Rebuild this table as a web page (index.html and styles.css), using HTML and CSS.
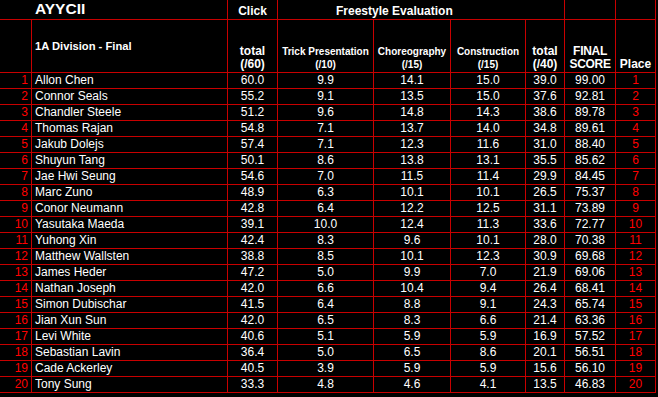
FILE: index.html
```html
<!DOCTYPE html>
<html lang="en">
<head>
<meta charset="utf-8">
<title>AYYCII 1A Division - Final</title>
<link rel="stylesheet" href="styles.css">
</head>
<body>
<table class="results">
  <colgroup>
    <col class="w-rank"><col class="w-name"><col class="w-click"><col class="w-trick"><col class="w-choreo"><col class="w-constr"><col class="w-total"><col class="w-final"><col class="w-place">
  </colgroup>
  <thead>
    <tr class="row-top">
      <th class="blank"></th>
      <th class="title">AYYCII</th>
      <th class="group">Click</th>
      <th class="group group-free" colspan="4">Freestyle Evaluation</th>
      <th class="group"></th>
      <th class="group"></th>
    </tr>
    <tr class="row-head">
      <th class="rank-head"></th>
      <th class="division">1A Division - Final</th>
      <th class="head">total<br>(/60)</th>
      <th class="head sub">Trick Presentation<br>(/10)</th>
      <th class="head sub">Choreography<br>(/15)</th>
      <th class="head sub">Construction<br>(/15)</th>
      <th class="head">total<br>(/40)</th>
      <th class="head final">FINAL<br>SCORE</th>
      <th class="head">Place</th>
    </tr>
  </thead>
  <tbody>
    <tr><td class="rank">1</td><td class="name">Allon Chen</td><td>60.0</td><td>9.9</td><td>14.1</td><td>15.0</td><td>39.0</td><td>99.00</td><td class="place">1</td></tr>
    <tr><td class="rank">2</td><td class="name">Connor Seals</td><td>55.2</td><td>9.1</td><td>13.5</td><td>15.0</td><td>37.6</td><td>92.81</td><td class="place">2</td></tr>
    <tr><td class="rank">3</td><td class="name">Chandler Steele</td><td>51.2</td><td>9.6</td><td>14.8</td><td>14.3</td><td>38.6</td><td>89.78</td><td class="place">3</td></tr>
    <tr><td class="rank">4</td><td class="name">Thomas Rajan</td><td>54.8</td><td>7.1</td><td>13.7</td><td>14.0</td><td>34.8</td><td>89.61</td><td class="place">4</td></tr>
    <tr><td class="rank">5</td><td class="name">Jakub Dolejs</td><td>57.4</td><td>7.1</td><td>12.3</td><td>11.6</td><td>31.0</td><td>88.40</td><td class="place">5</td></tr>
    <tr><td class="rank">6</td><td class="name">Shuyun Tang</td><td>50.1</td><td>8.6</td><td>13.8</td><td>13.1</td><td>35.5</td><td>85.62</td><td class="place">6</td></tr>
    <tr><td class="rank">7</td><td class="name">Jae Hwi Seung</td><td>54.6</td><td>7.0</td><td>11.5</td><td>11.4</td><td>29.9</td><td>84.45</td><td class="place">7</td></tr>
    <tr><td class="rank">8</td><td class="name">Marc Zuno</td><td>48.9</td><td>6.3</td><td>10.1</td><td>10.1</td><td>26.5</td><td>75.37</td><td class="place">8</td></tr>
    <tr><td class="rank">9</td><td class="name">Conor Neumann</td><td>42.8</td><td>6.4</td><td>12.2</td><td>12.5</td><td>31.1</td><td>73.89</td><td class="place">9</td></tr>
    <tr><td class="rank">10</td><td class="name">Yasutaka Maeda</td><td>39.1</td><td>10.0</td><td>12.4</td><td>11.3</td><td>33.6</td><td>72.77</td><td class="place">10</td></tr>
    <tr><td class="rank">11</td><td class="name">Yuhong Xin</td><td>42.4</td><td>8.3</td><td>9.6</td><td>10.1</td><td>28.0</td><td>70.38</td><td class="place">11</td></tr>
    <tr><td class="rank">12</td><td class="name">Matthew Wallsten</td><td>38.8</td><td>8.5</td><td>10.1</td><td>12.3</td><td>30.9</td><td>69.68</td><td class="place">12</td></tr>
    <tr><td class="rank">13</td><td class="name">James Heder</td><td>47.2</td><td>5.0</td><td>9.9</td><td>7.0</td><td>21.9</td><td>69.06</td><td class="place">13</td></tr>
    <tr><td class="rank">14</td><td class="name">Nathan Joseph</td><td>42.0</td><td>6.6</td><td>10.4</td><td>9.4</td><td>26.4</td><td>68.41</td><td class="place">14</td></tr>
    <tr><td class="rank">15</td><td class="name">Simon Dubischar</td><td>41.5</td><td>6.4</td><td>8.8</td><td>9.1</td><td>24.3</td><td>65.74</td><td class="place">15</td></tr>
    <tr><td class="rank">16</td><td class="name">Jian Xun Sun</td><td>42.0</td><td>6.5</td><td>8.3</td><td>6.6</td><td>21.4</td><td>63.36</td><td class="place">16</td></tr>
    <tr><td class="rank">17</td><td class="name">Levi White</td><td>40.6</td><td>5.1</td><td>5.9</td><td>5.9</td><td>16.9</td><td>57.52</td><td class="place">17</td></tr>
    <tr><td class="rank">18</td><td class="name">Sebastian Lavin</td><td>36.4</td><td>5.0</td><td>6.5</td><td>8.6</td><td>20.1</td><td>56.51</td><td class="place">18</td></tr>
    <tr><td class="rank">19</td><td class="name">Cade Ackerley</td><td>40.5</td><td>3.9</td><td>5.9</td><td>5.9</td><td>15.6</td><td>56.10</td><td class="place">19</td></tr>
    <tr><td class="rank">20</td><td class="name">Tony Sung</td><td>33.3</td><td>4.8</td><td>4.6</td><td>4.1</td><td>13.5</td><td>46.83</td><td class="place">20</td></tr>
  </tbody>
</table>
</body>
</html>
```

FILE: styles.css
```css
html, body {
  margin: 0;
  padding: 0;
  background: #000;
}

body {
  font-family: "Liberation Sans", Arial, sans-serif;
  color: #fff;
}

.results {
  table-layout: fixed;
  width: 656px;
  border-collapse: separate;
  border-spacing: 0;
  font-size: 12px;
}

.results th,
.results td {
  box-sizing: border-box;
  padding: 0;
  border-right: 1px solid #c80000;
  border-bottom: 1px solid #c80000;
  overflow: hidden;
  white-space: nowrap;
}

.w-rank { width: 32px; }
.w-name { width: 196px; }
.w-click { width: 50px; }
.w-trick { width: 96px; }
.w-choreo { width: 77px; }
.w-constr { width: 75px; }
.w-total { width: 39px; }
.w-final { width: 51px; }
.w-place { width: 40px; }

/* top title row */
.row-top { height: 20px; }

.row-top th {
  vertical-align: bottom;
  font-weight: bold;
  line-height: 15px;
  text-align: center;
}

.row-top .blank {
  border-right: none;
}

.row-top .title {
  vertical-align: top;
  text-align: left;
  padding-left: 3px;
  font-size: 15.5px;
  line-height: 17px;
}

.row-top .group-free {
  text-align: left;
  padding-left: 58px;
}

/* column headings row */
.row-head { height: 53px; }

.row-head th {
  font-weight: bold;
}

.row-head .division {
  vertical-align: middle;
  text-align: left;
  padding-left: 3px;
  font-size: 11.2px;
  line-height: 13px;
}

.row-head .head {
  vertical-align: bottom;
  text-align: center;
  line-height: 13px;
  padding-bottom: 1px;
}

.row-head .head.sub {
  font-size: 10px;
}

.row-head .final {
  letter-spacing: -0.3px;
}

/* data rows */
.results tbody tr { height: 16px; }

.results tbody td {
  line-height: 15px;
  text-align: center;
  vertical-align: middle;
}

.results tbody .rank {
  text-align: right;
  padding-right: 3px;
  color: #ff0000;
}

.results tbody .name {
  text-align: left;
  padding-left: 3px;
}

.results tbody .place {
  color: #ff0000;
}
```
